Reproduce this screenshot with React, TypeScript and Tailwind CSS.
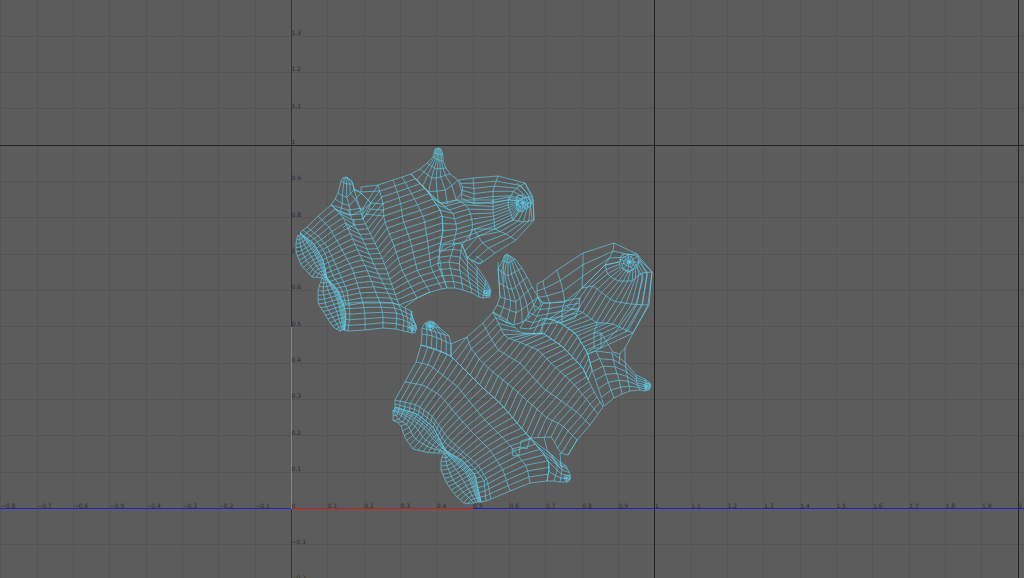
type Point = [number, number]
type Row = Point[]

interface Patch {
  rows: Row[]
  n: number
  lastSub?: number // extra rows between the last two
}

const UNIT = 363.4
const ORIGIN_X = 291.5
const ORIGIN_Y = 508.5

const toX = (u: number) => ORIGIN_X + u * UNIT
const toY = (v: number) => ORIGIN_Y - v * UNIT

// spread n + 1 points evenly along a polyline
function resample(row: Row, n: number): Row {
  const lengths = [0]
  for (let i = 1; i < row.length; i++) {
    lengths.push(lengths[i - 1] + Math.hypot(row[i][0] - row[i - 1][0], row[i][1] - row[i - 1][1]))
  }
  const total = lengths[lengths.length - 1]
  return Array.from({ length: n + 1 }, (_, k) => {
    const d = (total * k) / n
    let i = 1
    while (i < row.length - 1 && lengths[i] < d) i++
    const t = (d - lengths[i - 1]) / (lengths[i] - lengths[i - 1] || 1)
    return [
      row[i - 1][0] + (row[i][0] - row[i - 1][0]) * t,
      row[i - 1][1] + (row[i][1] - row[i - 1][1]) * t,
    ] as Point
  })
}

const line = (points: Row) => 'M' + points.map((p) => p[0].toFixed(1) + ' ' + p[1].toFixed(1)).join('L')

function patchPath({ rows, n, lastSub = 1 }: Patch) {
  const base = rows.map((row) => resample(row, n))
  const all: Row[] = []
  base.forEach((row, i) => {
    all.push(row)
    if (i !== base.length - 2) return
    for (let s = 1; s < lastSub; s++) {
      const t = s / lastSub
      all.push(row.map((p, k) => [p[0] + (base[i + 1][k][0] - p[0]) * t, p[1] + (base[i + 1][k][1] - p[1]) * t]))
    }
  })
  const across = all.map(line)
  const along = Array.from({ length: n + 1 }, (_, k) => line(all.map((row) => row[k])))
  return [...across, ...along].join('')
}

// pole of the mesh: uneven rings joined by spokes
function polePath(cx: number, cy: number, radii: number[], n: number) {
  const ring = (r: number): Row =>
    Array.from({ length: n + 1 }, (_, i) => {
      const a = (i / n) * Math.PI * 2
      const wobble = r * (1 + 0.18 * Math.sin(3 * a + r))
      return [cx + Math.cos(a) * wobble, cy + Math.sin(a) * wobble]
    })
  const rings = radii.map(ring)
  const spokes = Array.from({ length: n }, (_, i) => line([[cx, cy], ...rings.map((r) => r[i])]))
  return [...rings.map(line), ...spokes].join('')
}

const upperShell: Patch[] = [
  // body
  {
    n: 19,
    rows: [
      [[300, 233], [314, 244], [323, 260], [327, 278], [337, 290], [343, 305]],
      [[303, 230], [316, 240], [325, 253], [332, 274], [342, 290], [346, 305]],
      [[307, 227], [318, 236], [327, 246], [338, 270], [347, 290], [349, 305]],
      [[318, 216], [329, 227], [340, 246], [353, 270], [363, 303]],
      [[331, 205], [343, 217], [353, 240], [367, 270], [380, 303]],
      [[348, 210], [354, 224], [363, 240], [375, 267], [393, 303]],
      [[363, 208], [363, 219], [372, 237], [383, 260], [399, 305]],
      [[378, 185], [383, 203], [384, 220], [393, 243], [402, 270], [417, 298]],
      [[393, 180], [400, 200], [403, 220], [411, 243], [417, 270], [430, 292]],
      [[402, 177], [414, 198], [424, 218], [428, 244], [431, 268], [442, 289]],
      [[411, 174], [428, 192], [442, 213], [443, 230], [439, 255], [442, 273], [447, 288]],
    ],
  },
  // left ear
  {
    n: 4,
    rows: [
      [[343, 178], [346, 177], [348, 178]],
      [[341, 181], [346, 184], [353, 184]],
      [[338, 193], [346, 198], [354, 190]],
      [[335, 199], [348, 207], [361, 193]],
      [[331, 205], [346, 217], [358, 213], [371, 203]],
    ],
  },
  // right ear
  {
    n: 7,
    rows: [
      [[435, 149], [438, 148], [441, 149]],
      [[434, 153], [438, 154], [443, 155]],
      [[433, 157], [438, 160], [443, 161]],
      [[427, 163], [436, 169], [446, 168]],
      [[420, 169], [433, 179], [450, 174]],
      [[411, 174], [429, 192], [447, 190], [458, 180]],
      [[411, 174], [428, 192], [441, 205], [455, 202], [462, 192]],
    ],
  },
  // head
  {
    n: 9,
    rows: [
      [[428, 192], [442, 213], [443, 230], [439, 252]],
      [[441, 203], [453, 213], [457, 228], [453, 245]],
      [[456, 200], [464, 203], [470, 211], [473, 226], [469, 240]],
      [[493, 200], [493, 212], [495, 229]],
      [[509, 197], [508, 205], [513, 220]],
      [[519, 200], [518, 204], [521, 208]],
    ],
  },
  {
    n: 5,
    rows: [
      [[459, 180], [463, 188], [461, 198]],
      [[473, 178], [474, 190], [474, 204]],
      [[498, 176], [493, 190], [493, 202]],
      [[525, 183], [514, 190], [509, 200]],
      [[533, 197], [524, 198], [520, 201]],
    ],
  },
  {
    n: 4,
    rows: [
      [[480, 264], [467, 258], [462, 245]],
      [[495, 253], [483, 244], [474, 229]],
      [[516, 240], [506, 234], [495, 229]],
      [[534, 220], [524, 222], [513, 220]],
      [[533, 198], [528, 203], [524, 206]],
    ],
  },
  // arm
  {
    n: 7,
    rows: [
      [[443, 245], [437, 262], [447, 288]],
      [[455, 243], [449, 262], [455, 288]],
      [[462, 244], [459, 265], [463, 290]],
      [[467, 256], [468, 275], [472, 293]],
      [[477, 267], [477, 282], [479, 297]],
      [[486, 280], [484, 290], [483, 298]],
      [[491, 290], [490, 294], [490, 297]],
    ],
  },
  // leg
  {
    n: 5,
    rows: [
      [[343, 303], [346, 315], [344, 330]],
      [[349, 303], [350, 315], [348, 331]],
      [[363, 302], [365, 315], [365, 330]],
      [[380, 302], [383, 315], [383, 328]],
      [[393, 303], [397, 315], [396, 329]],
      [[399, 305], [404, 318], [403, 331]],
      [[405, 308], [408, 320], [408, 332]],
      [[411, 311], [412, 320], [412, 333]],
      [[414, 322], [417, 327], [415, 333]],
    ],
  },
  // cuffs
  {
    n: 14,
    lastSub: 3,
    rows: [
      [[298, 235], [296, 242], [296, 252], [301, 265], [312, 277], [325, 278]],
      [[299, 236], [301, 249], [306, 260], [314, 271], [325, 277]],
      [[300, 235], [305, 246], [311, 256], [317, 267], [325, 277]],
      [[301, 234], [308, 244], [315, 254], [320, 265], [326, 278]],
      [[300, 233], [314, 244], [323, 260], [327, 278]],
    ],
  },
  {
    n: 14,
    lastSub: 4,
    rows: [
      [[322, 278], [318, 290], [318, 303], [326, 316], [333, 327], [340, 331]],
      [[324, 279], [323, 292], [326, 306], [334, 319], [341, 331]],
      [[325, 279], [328, 290], [333, 302], [338, 315], [342, 330]],
      [[326, 279], [333, 290], [338, 302], [341, 315], [343, 330]],
      [[327, 278], [339, 291], [344, 305], [346, 318], [345, 330]],
    ],
  },
]

const lowerShell: Patch[] = [
  // body
  {
    n: 28,
    rows: [
      [[395, 407], [417, 414], [433, 427], [446, 451], [463, 461], [475, 475], [481, 502]],
      [[395, 404], [417, 410], [433, 422], [446, 444], [463, 456], [476, 470], [484, 480], [486, 501]],
      [[395, 400], [417, 405], [433, 417], [447, 437], [462, 451], [478, 465], [487, 480], [491, 499]],
      [[405, 382], [423, 385], [440, 395], [455, 413], [470, 430], [490, 450], [503, 470], [510, 491]],
      [[416, 362], [430, 365], [445, 377], [458, 387], [470, 402], [483, 418], [508, 443], [527, 467], [530, 483]],
      [[421, 345], [436, 349], [451, 356], [467, 372], [483, 388], [500, 403], [530, 438], [543, 453], [550, 464], [547, 481]],
    ],
  },
  {
    n: 24,
    rows: [
      [[451, 356], [467, 372], [483, 388], [500, 403], [530, 438], [552, 437], [560, 453], [568, 455]],
      [[467, 337], [470, 347], [480, 360], [493, 372], [513, 388], [530, 403], [547, 418], [562, 425], [577, 440]],
      [[483, 323], [490, 337], [498, 350], [520, 363], [543, 388], [560, 400], [578, 413], [590, 425]],
      [[493, 312], [505, 337], [522, 343], [538, 350], [553, 365], [573, 383], [587, 400], [598, 414]],
      [[507, 320], [522, 334], [543, 333], [563, 347], [583, 368], [593, 390], [603, 407]],
    ],
  },
  {
    n: 13,
    rows: [
      [[533, 334], [543, 333], [563, 347], [583, 368], [588, 380]],
      [[541, 318], [555, 320], [575, 333], [587, 352], [592, 370]],
    ],
  },
  // left ear
  {
    n: 6,
    rows: [
      [[421, 345], [436, 350], [451, 356]],
      [[422, 334], [433, 336], [451, 344]],
      [[422, 328], [432, 331], [449, 336]],
      [[425, 323], [430, 326], [440, 328]],
      [[429, 321], [431, 321], [435, 323]],
    ],
  },
  // right ear
  {
    n: 7,
    rows: [
      [[504, 256], [507, 254], [510, 256]],
      [[503, 260], [508, 263], [515, 259]],
      [[498, 269], [508, 276], [522, 268]],
      [[499, 283], [512, 290], [527, 277]],
      [[500, 297], [516, 302], [532, 287]],
      [[497, 305], [517, 313], [538, 297]],
      [[493, 312], [510, 326], [526, 321], [541, 305]],
    ],
  },
  {
    n: 4,
    rows: [
      [[538, 297], [531, 310], [520, 328]],
      [[543, 303], [538, 314], [530, 329]],
      [[550, 303], [548, 313], [543, 324]],
      [[565, 301], [562, 309], [562, 322]],
      [[580, 298], [579, 308], [575, 318]],
    ],
  },
  // head
  {
    n: 13,
    rows: [
      [[549, 319], [563, 324], [577, 335], [588, 354]],
      [[567, 307], [582, 312], [597, 323], [610, 323], [633, 333]],
      [[582, 288], [593, 286], [613, 301], [630, 304], [648, 305]],
      [[605, 265], [608, 275], [618, 281], [632, 281], [641, 273], [652, 272]],
      [[619, 262], [621, 268], [629, 271], [637, 267], [640, 260]],
    ],
  },
  {
    n: 3,
    rows: [
      [[537, 284], [537, 296], [542, 303]],
      [[543, 281], [545, 292], [550, 303]],
      [[557, 270], [562, 286], [565, 302]],
      [[583, 253], [583, 270], [582, 288]],
      [[614, 243], [613, 252], [605, 265]],
      [[637, 254], [626, 255], [619, 262]],
    ],
  },
  // arm
  {
    n: 6,
    rows: [
      [[588, 354], [592, 370], [598, 387], [604, 406]],
      [[596, 351], [603, 366], [608, 382], [614, 398]],
      [[612, 353], [615, 367], [619, 380], [622, 394]],
      [[625, 362], [627, 375], [630, 391]],
      [[636, 375], [637, 383], [640, 390]],
      [[645, 379], [646, 385], [645, 391]],
      [[650, 383], [651, 386], [649, 390]],
    ],
  },
  // leg
  {
    n: 5,
    rows: [
      [[530, 438], [543, 453], [550, 464], [547, 481]],
      [[552, 455], [558, 467], [554, 481]],
      [[560, 462], [562, 470], [560, 482]],
      [[566, 466], [569, 472], [571, 478], [568, 482]],
    ],
  },
  // cuffs
  {
    n: 15,
    lastSub: 3,
    rows: [
      [[393, 410], [393, 421], [400, 423], [405, 438], [413, 449], [430, 453], [444, 453]],
      [[394, 412], [399, 420], [408, 425], [414, 438], [428, 447], [444, 452]],
      [[394, 411], [406, 419], [417, 428], [423, 438], [434, 446], [444, 452]],
      [[394, 410], [410, 418], [424, 428], [432, 438], [445, 451]],
      [[395, 407], [417, 414], [433, 427], [446, 451]],
    ],
  },
  {
    n: 15,
    lastSub: 4,
    rows: [
      [[444, 453], [441, 460], [441, 470], [447, 484], [456, 496], [465, 504], [472, 503]],
      [[445, 454], [447, 466], [453, 480], [463, 492], [474, 503]],
      [[445, 454], [452, 464], [460, 475], [467, 487], [476, 502]],
      [[446, 453], [456, 463], [466, 473], [472, 486], [478, 502]],
      [[446, 451], [463, 461], [475, 475], [481, 502]],
    ],
  },
]

// edges that lie outside the regular patches
const looseEdges: Row[] = [
  [[354, 189], [361, 192], [361, 187], [378, 185]],
  [[361, 192], [379, 191]],
  [[371, 203], [384, 204]],
  [[369, 209], [384, 210]],
  [[366, 214], [384, 216]],
  [[346, 177], [352, 181], [354, 189]],
  [[361, 193], [371, 203], [368, 210], [363, 219]],
  [[354, 189], [363, 219]],
  [[347, 229], [354, 225], [354, 219]],
  [[343, 228], [347, 224], [350, 227]],
  [[525, 183], [533, 200], [534, 220]],
  [[517, 183], [527, 193], [530, 200], [532, 220]],
  [[430, 292], [417, 298], [405, 307]],
  [[472, 260], [478, 264], [483, 261], [476, 256]],
  [[412, 311], [409, 328], [413, 333]],
  [[637, 254], [652, 272], [649, 305], [633, 333], [625, 348], [625, 362]],
  [[637, 254], [647, 275], [642, 304], [625, 332]],
  [[633, 260], [643, 278], [636, 304], [617, 330], [606, 341]],
  [[588, 352], [594, 348], [594, 333], [601, 333], [606, 341], [601, 348], [594, 348]],
  [[597, 323], [594, 333]],
  [[601, 333], [601, 348]],
  [[606, 341], [613, 352], [620, 354], [625, 348]],
  [[620, 354], [619, 364]],
  [[523, 333], [542, 334], [542, 322]],
  [[451, 344], [467, 337]],
  [[451, 344], [451, 356]],
  [[568, 455], [577, 440]],
  [[560, 453], [561, 466], [566, 466]],
  [[544, 437], [547, 450], [560, 468]],
  [[512, 449], [520, 447], [521, 441], [530, 438]],
  [[512, 449], [513, 456], [519, 455], [520, 447], [527, 449], [530, 438]],
  [[498, 262], [500, 297]],
  [[503, 260], [504, 283]],
]

const mesh = [
  ...upperShell.map(patchPath),
  ...lowerShell.map(patchPath),
  ...looseEdges.map(line),
  polePath(523, 203, [2, 5, 8], 11),
  polePath(629, 262, [2, 5, 9], 11),
  polePath(430, 326, [2, 4], 8),
  polePath(413, 328, [3], 7),
  polePath(647, 386, [3], 7),
  polePath(567, 478, [3], 7),
  polePath(487, 293, [3], 7),
].join('')

const range = (from: number, to: number) => Array.from({ length: to - from + 1 }, (_, i) => from + i)
const columns = range(-8, 20)
const rows = range(-2, 13)

const format = (step: number) => (step < 0 ? '−' : '') + Math.abs(step) / 10

function Grid() {
  return (
    <g shapeRendering="crispEdges">
      <g className="stroke-[#555555]">
        {columns.map((c) => (
          <line key={c} x1={toX(c / 10)} x2={toX(c / 10)} y1="0" y2="100%" />
        ))}
        {rows.map((r) => (
          <line key={r} x1="0" x2="100%" y1={toY(r / 10)} y2={toY(r / 10)} />
        ))}
      </g>
      <g className="stroke-[#222222]">
        <line x1={toX(1)} x2={toX(1)} y1="0" y2="100%" />
        <line x1={toX(2)} x2={toX(2)} y1="0" y2="100%" />
        <line x1="0" x2="100%" y1={toY(1)} y2={toY(1)} />
      </g>
    </g>
  )
}

function Axes() {
  return (
    <g shapeRendering="crispEdges">
      <line className="stroke-[#2525b0]" x1={ORIGIN_X} x2={ORIGIN_X} y1="0" y2="100%" />
      <line className="stroke-[#2222cc]" x1="0" x2="100%" y1={ORIGIN_Y} y2={ORIGIN_Y} />
      <line className="stroke-[#c81e1e]" x1={ORIGIN_X} x2={toX(0.5)} y1={ORIGIN_Y} y2={ORIGIN_Y} />
      <line className="stroke-[#2fc02f]" x1={ORIGIN_X} x2={ORIGIN_X} y1={toY(0.5)} y2={ORIGIN_Y} />
    </g>
  )
}

function Labels() {
  return (
    <g className="fill-[#2c2c2c] font-['DejaVu_Sans',sans-serif] text-[6px]">
      {columns.map((c) => (
        <text key={c} x={toX(c / 10)} y={ORIGIN_Y - 1}>
          {format(c)}
        </text>
      ))}
      {rows
        .filter((r) => r !== 0)
        .map((r) => (
          <text key={r} x={ORIGIN_X} y={toY(r / 10) - 1}>
            {format(r)}
          </text>
        ))}
    </g>
  )
}

export default function App() {
  return (
    <main className="flex h-screen w-full overflow-hidden bg-[#5c5c5c]">
      <svg className="h-full w-full" role="img" aria-label="UV">
        <Grid />
        <Axes />
        <Labels />
        <path d={mesh} className="fill-none stroke-[#5fd0ee] stroke-[0.7]" strokeOpacity="0.9" />
      </svg>
    </main>
  )
}
